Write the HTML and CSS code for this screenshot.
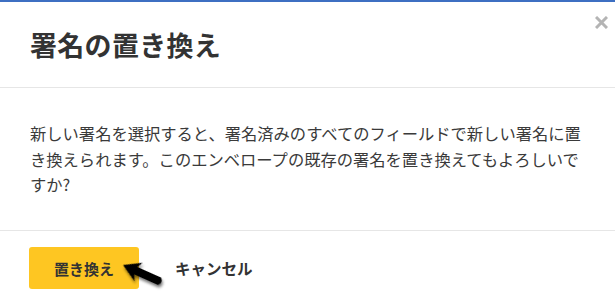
FILE: index.html
```html
<!DOCTYPE html>
<html lang="ja">
<head>
<meta charset="utf-8">
<title>署名の置き換え</title>
<link rel="stylesheet" href="styles.css">
</head>
<body>
<div class="dialog">
  <header class="dialog-header">
    <h1 class="dialog-title">署名の置き換え</h1>
    <button class="close-btn" aria-label="閉じる">
      <svg width="13" height="13" viewBox="0 0 13 13"><path d="M1 1 L12 12 M12 1 L1 12" stroke="#b4b4b4" stroke-width="3" stroke-linecap="butt"/></svg>
    </button>
  </header>
  <section class="dialog-body">
    <p class="message">新しい署名を選択すると、署名済みのすべてのフィールドで新しい署名に置<br>き換えられます。このエンベロープの既存の署名を置き換えてもよろしいですか?</p>
  </section>
  <footer class="dialog-footer">
    <button class="btn-primary">置き換え</button>
    <button class="btn-link">キャンセル</button>
    <svg class="pointer" width="60" height="45" viewBox="0 0 60 45">
      <defs>
        <filter id="sh" x="-30%" y="-30%" width="160%" height="160%">
          <feGaussianBlur in="SourceAlpha" stdDeviation="1.6"/>
          <feOffset dx="1.5" dy="2" result="b"/>
          <feComponentTransfer><feFuncA type="linear" slope="0.55"/></feComponentTransfer>
          <feMerge><feMergeNode/><feMergeNode in="SourceGraphic"/></feMerge>
        </filter>
      </defs>
      <g filter="url(#sh)" transform="translate(6,13) rotate(24)">
        <path d="M0 0 L17 -10 L14 -4 L40 -4 Q44 0 40 4 L14 4 L17 10 Z" fill="#000"/>
      </g>
    </svg>
  </footer>
</div>
</body>
</html>
```

FILE: styles.css
```css
* { box-sizing: border-box; }
html, body { margin: 0; padding: 0; background: #fff; }
body {
  font-family: "Noto Sans CJK JP", "Noto Sans", sans-serif;
  color: #333;
}
.dialog {
  width: 615px;
  height: 302px;
  border-top: 2px solid #3d6fc2;
  display: flex;
  flex-direction: column;
  background: #fff;
  overflow: hidden;
}
.dialog-header {
  height: 86px;
  border-bottom: 1px solid #e6e6e6;
  display: flex;
  align-items: center;
  padding-left: 30px;
}
.dialog-title {
  flex: 1;
  margin: 0;
  font-size: 27px;
  font-weight: 700;
  line-height: 1;
  color: #333;
  letter-spacing: 0.3px;
}
.close-btn {
  align-self: flex-start;
  margin-top: 14px;
  margin-right: 7px;
  padding: 0;
  border: 0;
  background: none;
  width: 13px;
  height: 13px;
  display: flex;
}
.dialog-body {
  height: 143px;
  border-bottom: 1px solid #e6e6e6;
  padding: 33px 30px 0 30px;
}
.message {
  margin: 0;
  font-size: 16.3px;
  line-height: 25.5px;
  color: #3a3a3a;
  width: 555px;
}
.dialog-footer {
  position: relative;
  display: flex;
  align-items: flex-start;
  padding: 16px 0 0 29px;
  gap: 22px;
}
.btn-primary {
  width: 110px;
  height: 42px;
  border: 0;
  border-radius: 3px;
  background: #fec622;
  color: #333;
  font-family: inherit;
  font-size: 15px;
  font-weight: 700;
  padding: 0;
}
.btn-link {
  height: 42px;
  border: 0;
  background: none;
  color: #333;
  font-family: inherit;
  font-size: 15.5px;
  font-weight: 700;
  padding: 0 14px;
}
.pointer {
  position: absolute;
  left: 117px;
  top: 21px;
}
```
